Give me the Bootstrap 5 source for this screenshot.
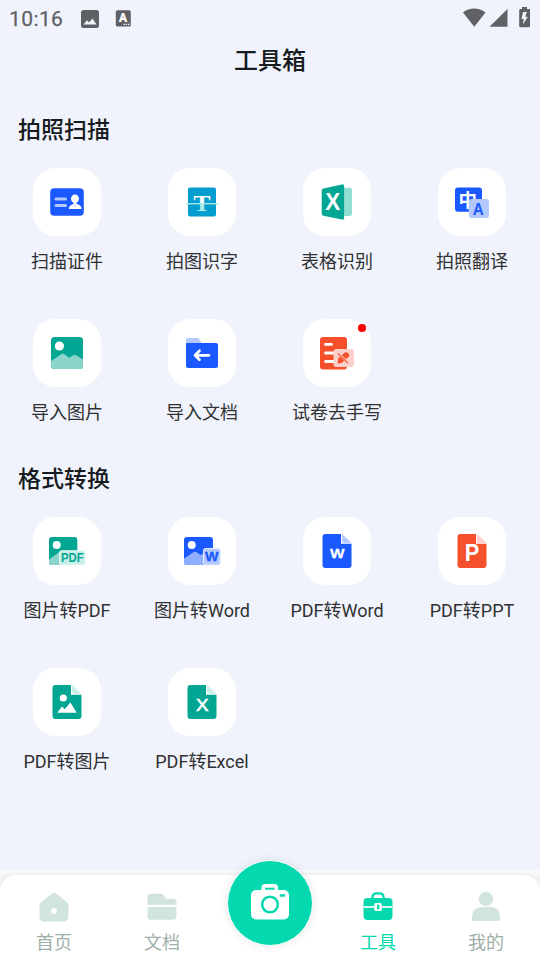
<!DOCTYPE html>
<html lang="zh-CN">
<head>
<meta charset="utf-8">
<meta name="viewport" content="width=device-width, initial-scale=1">
<title>工具箱</title>
<link href="https://cdn.jsdelivr.net/npm/bootstrap@5.3.0/dist/css/bootstrap.min.css" rel="stylesheet">
<style>
body{background:#f0f3fc;font-family:Roboto,"Noto Sans CJK SC",sans-serif;color:#161b20;height:960px;overflow:hidden}
svg{display:block}
.status-bar{height:37px;color:#5f6164;padding:0 10px 0 9px}
.clock{font-size:21px;font-weight:400;letter-spacing:.4px;width:72px;line-height:37px;padding-top:1px;-webkit-text-stroke:.25px currentColor}
.signal-icons{margin-bottom:2px}
.page-title{height:43px;padding-top:5px;font-size:24px;font-weight:500;line-height:39px}
.tool-section{margin-top:32px}
.tool-section h2{font-size:23px;font-weight:500;line-height:36px;margin:0 0 19px 18px;padding-top:1px}
.tool-grid{row-gap:41px!important}
.tool{height:110px}
.tile{width:68px;height:68px;border-radius:22px;background:#fff;margin:0 1px 12px 0}
.tool-label{font-size:18px;line-height:28px;color:#303132;white-space:nowrap;margin-right:1px}
.tile text{font-family:"Liberation Sans",sans-serif;font-weight:700}
.dock{height:90px;background:linear-gradient(#fcfcfd,#f3f3f4 6px)}
.dock-bar{height:85px;background:#fff;border-radius:16px 16px 0 0;padding-top:14px;box-shadow:0 -1px 4px rgba(0,0,0,.04)}
.dock-item{width:108px;height:71px;color:#9eaea8}
.dock-item svg{color:#d1e4df}
.dock-item.active,.dock-item.active svg{color:#03d8ae}
.dock-label{font-size:18px;line-height:28px;margin-top:4px}
.camera-btn{width:86px;height:86px;margin-top:-29px;padding-bottom:3px;border:1px solid #fff;background:#03d8ae;flex:none;box-shadow:0 0 8px rgba(0,0,0,.1)}
</style>
</head>
<body class="d-flex flex-column">
<svg width="0" height="0" class="position-absolute" aria-hidden="true">
<defs>
<linearGradient id="scan" gradientUnits="userSpaceOnUse" x1="0" y1="28" x2="0" y2="44"><stop offset=".5" stop-color="#fff"/><stop offset=".5" stop-color="#b2eef0"/></linearGradient>
<path id="sheet" d="M22.300 17H38v9.700h10.500V48a3 3 0 0 1-3 3H22.500a3 3 0 0 1-3-3V20a3 3 0 0 1 2.800-3z"/>
<path id="fold" d="M39 17l9.500 8.800H41a2 2 0 0 1-2-2z"/>
</defs>
</svg>

<header>
<div class="status-bar d-flex align-items-center">
<span class="clock">10:16</span>
<svg width="18" height="18"><path fill="currentColor" fill-rule="evenodd" d="M2.500 0h13A2.500 2.500 0 0 1 18 2.500v13a2.500 2.500 0 0 1-2.500 2.500h-13A2.500 2.500 0 0 1 0 15.500v-13A2.500 2.500 0 0 1 2.500 0zM2.500 14.500h13L11.500 8.500 8 12.500 6 10.300z"/></svg>
<svg width="16" height="18" class="ms-3"><rect x=".8" y=".3" width="15" height="16.300" rx="1.500" fill="currentColor"/><text x="8" y="12" text-anchor="middle" font-size="12.500" font-weight="900" fill="#fff" font-family="Roboto,sans-serif">A</text><path d="M8.500 14.300h1.300M10.800 14.300h1.300M13 14.300h1.300" stroke="#fff" stroke-width="1.300"/></svg>
<svg width="67" height="21" class="signal-icons ms-auto" fill="currentColor"><path d="M0 5.500C6 .2 16 .2 22.500 5.500L11.300 19.800z"/><path d="M44.500 2v17.700h-18z"/><path fill-rule="evenodd" d="M59 0h5v2h2a1.200 1.200 0 0 1 1.200 1.200v15.500a1.500 1.500 0 0 1-1.500 1.500h-8a1.500 1.500 0 0 1-1.500-1.500V3.200A1.200 1.200 0 0 1 57.400 2H59zM60 5l-1.500 7h2.300l-1 5.500 5-7.700h-2.600L64 5z"/></svg>
</div>
<h1 class="page-title text-center m-0">工具箱</h1>
</header>

<main class="flex-grow-1">
<section class="tool-section">
<h2>拍照扫描</h2>
<div class="row g-0 tool-grid">
<div class="col-3 tool d-flex flex-column align-items-center"><div class="tile"><svg width="68" height="68"><rect x="17.200" y="20.200" width="33.600" height="27.500" rx="4" fill="#1a59ff"/><path d="M23 31h9.500M23 37.400h9.500" stroke="#b3c8ff" stroke-width="3" stroke-linecap="round"/><ellipse cx="42" cy="30.800" rx="4" ry="4.300" fill="#fff"/><path d="M40.500 33h3v3c3 .5 5 2 5.100 5.100H35.800c.1-3 2-4.500 4.700-5.100z" fill="#fff"/><path d="M41.300 37h1.400l-.7 2.500z" fill="#8aabff"/></svg></div><div class="tool-label">扫描证件</div></div>
<div class="col-3 tool d-flex flex-column align-items-center"><div class="tile"><svg width="68" height="68"><rect x="20" y="19.500" width="28" height="29" rx="2" fill="#059dcf"/><text x="34" y="43" text-anchor="middle" font-size="23.500" textLength="17" lengthAdjust="spacingAndGlyphs" fill="url(#scan)" style="font-family:'Liberation Serif',serif">T</text><path d="M18 35.700h32" stroke="#a5e9e8" stroke-width="1.400"/></svg></div><div class="tool-label">拍图识字</div></div>
<div class="col-3 tool d-flex flex-column align-items-center"><div class="tile"><svg width="68" height="68"><rect x="34" y="19.700" width="15" height="28.300" rx="2.500" fill="#92ded5"/><path d="M20.400 20.500l18.500-4.100q2.200-.4 2.200 1.800v31.600q0 2.200-2.200 1.800L20.400 47.800q-1.700-.4-1.700-2V22.400q0-1.500 1.700-1.900z" fill="#03a593"/><text x="29.700" y="42" text-anchor="middle" font-size="23.500" textLength="15" lengthAdjust="spacingAndGlyphs" fill="#fff">X</text></svg></div><div class="tool-label">表格识别</div></div>
<div class="col-3 tool d-flex flex-column align-items-center"><div class="tile"><svg width="68" height="68"><rect x="17" y="19.400" width="27" height="24.300" rx="3" fill="#1a59ff"/><text x="29.700" y="38.700" text-anchor="middle" font-size="18.500" fill="#fff" style="font-family:'Noto Sans CJK SC',sans-serif;font-weight:700">中</text><rect x="30.700" y="31" width="20.300" height="19" rx="3" fill="#b3c8ff"/><text x="40.300" y="47" text-anchor="middle" font-size="17" textLength="11" lengthAdjust="spacingAndGlyphs" fill="#1a59ff">A</text></svg></div><div class="tool-label">拍照翻译</div></div>
<div class="col-3 tool d-flex flex-column align-items-center"><div class="tile"><svg width="68" height="68"><rect x="18" y="18" width="32" height="32" rx="3.500" fill="#03a593"/><circle cx="26.400" cy="27" r="4.600" fill="#fff"/><path d="M18 42l10.500-7q1.200-.8 2.400 0l5.400 3.700 4-2.500q1.400-.8 2.800 0L50 40.500v6a3.500 3.500 0 0 1-3.500 3.500h-25a3.500 3.500 0 0 1-3.500-3.500z" fill="#8bd4cc"/></svg></div><div class="tool-label">导入图片</div></div>
<div class="col-3 tool d-flex flex-column align-items-center"><div class="tile"><svg width="68" height="68"><path d="M18 25v-4a2 2 0 0 1 2-2h8.500q1.500 0 2.400 1l3.500 5z" fill="#b3c8ff"/><path d="M18 24h30a2 2 0 0 1 2 2v20.500a2.500 2.500 0 0 1-2.500 2.500h-27a2.500 2.500 0 0 1-2.500-2.500z" fill="#1a59ff"/><path d="M41 36.300H28M31.500 31.800L27 36.300l4.500 4.500" fill="none" stroke="#fff" stroke-width="2.700" stroke-linecap="round" stroke-linejoin="round"/></svg></div><div class="tool-label">导入文档</div></div>
<div class="col-3 tool d-flex flex-column align-items-center"><div class="tile"><svg width="68" height="68"><rect x="17" y="18" width="27" height="32.500" rx="3" fill="#f5502b"/><path d="M22.500 25.400h6M22.500 34H31M22.500 42.500H31" stroke="#fff" stroke-width="2.800" stroke-linecap="round"/><rect x="30.500" y="30" width="20.500" height="18" rx="3" fill="#ffd0c9"/><path d="M34.700 44.500l.5-5 6.300-5.700q1.700-1.200 3.500.2t1.200 3.200l-7 6.300q-1.800 1.200-4.500 1z" fill="#f5502b"/><path d="M35.500 34.500l9.500 9.500" stroke="#ffd0c9" stroke-width="2.400"/><path d="M35 34.300l9.800 9.800" stroke="#f5502b" stroke-width="1.200"/><circle cx="59" cy="9" r="4.100" fill="red"/></svg></div><div class="tool-label">试卷去手写</div></div>
</div>
</section>

<section class="tool-section">
<h2>格式转换</h2>
<div class="row g-0 tool-grid">
<div class="col-3 tool d-flex flex-column align-items-center"><div class="tile"><svg width="68" height="68"><rect x="16" y="20" width="28.300" height="28" rx="3" fill="#03a593"/><circle cx="23.700" cy="28" r="4" fill="#fff"/><path d="M16 42.500l10.500-7.700q1-.7 2 0L36 41v7H19a3 3 0 0 1-3-3z" fill="#8bd4cc"/><rect x="26.500" y="33.800" width="25.800" height="14.200" rx="2" fill="#c8eee8" stroke="#e8faf7"/><text x="28" y="45.300" font-size="12.600" textLength="22.500" lengthAdjust="spacingAndGlyphs" fill="#03a593">PDF</text></svg></div><div class="tool-label">图片转PDF</div></div>
<div class="col-3 tool d-flex flex-column align-items-center"><div class="tile"><svg width="68" height="68"><rect x="16" y="20" width="29" height="28" rx="3" fill="#1a59ff"/><circle cx="23.700" cy="28" r="4" fill="#fff"/><path d="M16 41.500l9.500-6.200q1.500-.9 3 0l4 2.700 4-2V48H19a3 3 0 0 1-3-3z" fill="#8faeff"/><rect x="35.500" y="31.500" width="16.700" height="16.500" rx="2" fill="#b3c8ff" stroke="#e4ecff"/><text x="43.800" y="44.200" text-anchor="middle" font-size="13.200" textLength="13.500" lengthAdjust="spacingAndGlyphs" fill="#1a59ff" stroke="#1a59ff" stroke-width=".3">W</text></svg></div><div class="tool-label">图片转Word</div></div>
<div class="col-3 tool d-flex flex-column align-items-center"><div class="tile"><svg width="68" height="68"><use href="#sheet" fill="#1a59ff"/><use href="#fold" fill="#b3c8ff"/><text x="34.200" y="41.300" text-anchor="middle" font-size="13.200" textLength="14.500" lengthAdjust="spacingAndGlyphs" fill="#fff" stroke="#fff" stroke-width=".3">W</text></svg></div><div class="tool-label">PDF转Word</div></div>
<div class="col-3 tool d-flex flex-column align-items-center"><div class="tile"><svg width="68" height="68"><use href="#sheet" fill="#f5502b"/><use href="#fold" fill="#ffd0c9"/><text x="34" y="44.200" text-anchor="middle" font-size="23" textLength="14.500" lengthAdjust="spacingAndGlyphs" fill="#fff">P</text></svg></div><div class="tool-label">PDF转PPT</div></div>
<div class="col-3 tool d-flex flex-column align-items-center"><div class="tile"><svg width="68" height="68"><use href="#sheet" fill="#03a593"/><use href="#fold" fill="#c8eee8"/><circle cx="30.300" cy="30" r="3.600" fill="#fff"/><path d="M24.300 44.700L29 38.500l2.700 2.700 5.700-6.700 6.300 10.200z" fill="#fff"/></svg></div><div class="tool-label">PDF转图片</div></div>
<div class="col-3 tool d-flex flex-column align-items-center"><div class="tile"><svg width="68" height="68"><use href="#sheet" fill="#03a593"/><use href="#fold" fill="#c8eee8"/><text x="34.200" y="43" text-anchor="middle" font-size="17" fill="#fff" style="font-weight:400" textLength="12.500" lengthAdjust="spacingAndGlyphs" stroke="#fff" stroke-width=".6">X</text></svg></div><div class="tool-label">PDF转Excel</div></div>
</div>
</section>
</main>

<nav class="dock d-flex flex-column justify-content-end">
<div class="dock-bar d-flex">
<div class="dock-item d-flex flex-column align-items-center"><svg width="36" height="36" fill="currentColor"><path fill-rule="evenodd" d="M16 4.500q2-1.500 4 0l10.500 8.200q2 1.600 2 4V28a4.500 4.500 0 0 1-4.500 4.500H8A4.500 4.500 0 0 1 3.500 28V16.700q0-2.400 2-4zM18 19a3 3 0 1 0 0 6 3 3 0 0 0 0-6z"/></svg><div class="dock-label">首页</div></div>
<div class="dock-item d-flex flex-column align-items-center"><svg width="36" height="36" fill="currentColor"><path d="M3.500 15.700V8.300A3.500 3.500 0 0 1 7 4.800h10q1.500 0 2.500 1.200l2.500 3.800h7a3.500 3.500 0 0 1 3.500 3.500v2.400zM3.500 18h29v9.300a3.500 3.500 0 0 1-3.500 3.500H7a3.500 3.500 0 0 1-3.500-3.500z"/></svg><div class="dock-label">文档</div></div>
<div class="dock-item d-flex flex-column align-items-center"><div class="camera-btn rounded-circle d-flex align-items-center justify-content-center"><svg width="38" height="36" viewBox="0 0 38 36"><path fill="#fff" d="M5 6h5.500V3.500A3.500 3.500 0 0 1 14 0h9.500A3.500 3.500 0 0 1 27 3.500V6h6a5 5 0 0 1 5 5v19.500a5 5 0 0 1-5 5H5a5 5 0 0 1-5-5V11a5 5 0 0 1 5-5z"/><g fill="none" stroke="#03d8ae"><path d="M14 4.700h9.500" stroke-width="2"/><circle cx="19" cy="20.500" r="7.800" stroke-width="2.500"/><path d="M30 11.500h3" stroke-width="2.700" stroke-linecap="round"/></g></svg></div></div>
<div class="dock-item active d-flex flex-column align-items-center"><svg width="36" height="36"><path d="M12.500 9.500V8a3.700 3.700 0 0 1 3.700-3.700h3.600A3.700 3.700 0 0 1 23.500 8v1.500" fill="none" stroke="currentColor" stroke-width="2.300"/><rect x="3.500" y="9" width="29" height="22" rx="4" fill="currentColor"/><path d="M3.500 18h29" stroke="#fff" stroke-width="1.700"/><rect x="14.300" y="14" width="7.400" height="8" rx="1.500" fill="#fff"/><rect x="17" y="15.700" width="2.300" height="4.600" fill="currentColor"/></svg><div class="dock-label">工具</div></div>
<div class="dock-item d-flex flex-column align-items-center"><svg width="36" height="36" fill="currentColor"><circle cx="18" cy="10" r="7.200"/><path d="M14 18h8q10 0 10 11v1.500a1.500 1.500 0 0 1-1.500 1.500h-25A1.500 1.500 0 0 1 4 30.500V29q0-11 10-11z"/></svg><div class="dock-label">我的</div></div>
</div>
</nav>
<script src="https://cdn.jsdelivr.net/npm/bootstrap@5.3.0/dist/js/bootstrap.bundle.min.js"></script>
</body>
</html>
